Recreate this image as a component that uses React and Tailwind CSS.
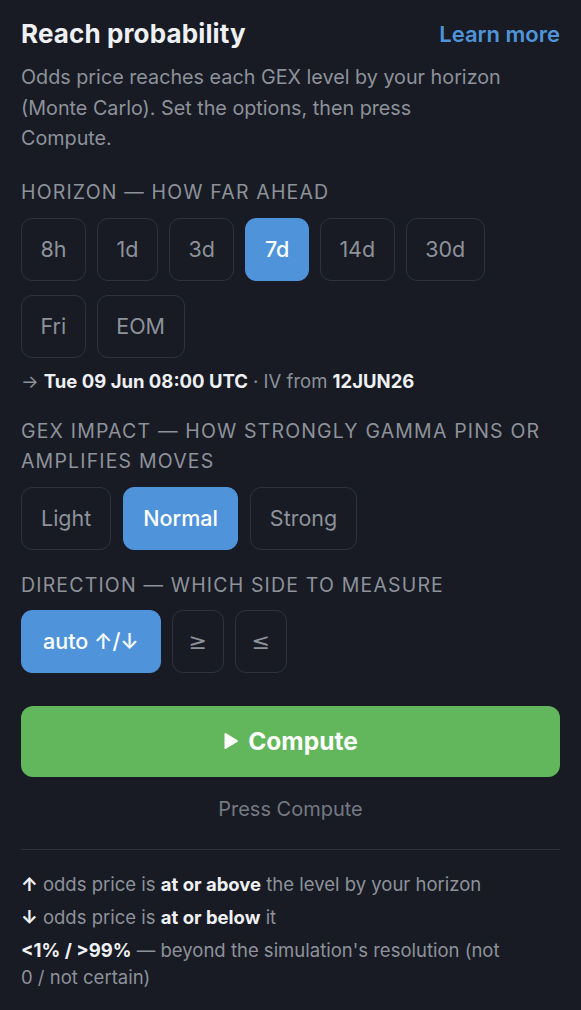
import React, { useState } from 'react';

const horizons = ['8h', '1d', '3d', '7d', '14d', '30d', 'Fri', 'EOM'];
const impacts = ['Light', 'Normal', 'Strong'];

const Chip = ({ active, children, onClick, className = '' }) => (
  <button
    onClick={onClick}
    className={`h-[63px] rounded-[11px] border text-[21.5px] ${
      active
        ? 'bg-[#4f94db] border-[#4f94db] text-white font-medium'
        : 'bg-transparent border-[#2e333b] text-[#8d929b]'
    } ${className}`}
  >
    {children}
  </button>
);

export default function App() {
  const [horizon, setHorizon] = useState('7d');
  const [impact, setImpact] = useState('Normal');
  const [dir, setDir] = useState('auto');

  return (
    <div
      className="min-h-[1010px] w-full bg-[#181b23] px-[21px] pt-[18px] pb-6 text-[#8d929b]"
      style={{ fontFamily: 'Inter, "Noto Sans", sans-serif' }}
    >
      <div className="flex items-center justify-between">
        <h1 className="text-[26px] leading-[32px] font-bold tracking-[0.005em] text-[#eef0f3]">Reach probability</h1>
        <a className="text-[22px] leading-[32px] font-semibold text-[#4f94db]">Learn more</a>
      </div>
      <p className="mt-[12px] max-w-[484px] text-[19.75px] leading-[30.5px] text-[#8d929b]">
        Odds price reaches each GEX level by your horizon (Monte Carlo). Set the options, then press Compute.
      </p>

      {/* horizon */}
      <div className="mt-[26px] text-[19.5px] leading-[24px] uppercase tracking-[0.06em]">Horizon — how far ahead</div>
      <div className="mt-[14px] flex flex-wrap gap-x-[11px] gap-y-[14px]">
        {horizons.map((h) => (
          <Chip key={h} active={horizon === h} onClick={() => setHorizon(h)} className="px-[18.5px]">
            {h}
          </Chip>
        ))}
      </div>
      <div className="mt-[11px] text-[18.5px] leading-[24px]">
        → <span className="font-bold text-[#eef0f3]">Tue 09 Jun 08:00 UTC</span> · IV from{' '}
        <span className="font-bold text-[#eef0f3]">12JUN26</span>
      </div>

      {/* gex impact */}
      <div className="mt-[23px] text-[19.5px] leading-[30px] uppercase tracking-[0.06em]">
        GEX impact — how strongly gamma pins or amplifies moves
      </div>
      <div className="mt-[11px] flex gap-[12px]">
        {impacts.map((i) => (
          <Chip key={i} active={impact === i} onClick={() => setImpact(i)} className="px-[19px]">
            {i}
          </Chip>
        ))}
      </div>

      {/* direction */}
      <div className="mt-[23px] text-[19.5px] leading-[24px] uppercase tracking-[0.06em]">Direction — which side to measure</div>
      <div className="mt-[13px] flex gap-[11px]">
        <Chip active={dir === 'auto'} onClick={() => setDir('auto')} className="px-[21px]">
          auto ↑/↓
        </Chip>
        <Chip active={dir === 'ge'} onClick={() => setDir('ge')} className="w-[52px]">
          <span className="text-[22px] font-['DejaVu_Sans',sans-serif]">≥</span>
        </Chip>
        <Chip active={dir === 'le'} onClick={() => setDir('le')} className="w-[52px]">
          <span className="text-[22px] font-['DejaVu_Sans',sans-serif]">≤</span>
        </Chip>
      </div>

      <button className="mt-[33px] flex h-[71px] w-full items-center justify-center gap-[9px] rounded-[12px] bg-[#62b65b] text-[24.5px] font-bold text-white">
        <svg width="16" height="18" viewBox="0 0 16 18">
          <path d="M2.5 2 L14 9 L2.5 16 Z" fill="white" stroke="white" strokeWidth="2" strokeLinejoin="round" />
        </svg>
        Compute
      </button>
      <div className="mt-[20px] text-center text-[20px] leading-[24px] text-[#747983]">Press Compute</div>

      <div className="mt-[28px] border-t border-[#2e333b] pt-[18px] text-[18.5px] leading-[33px]">
        <div>
          <span className="font-bold text-[#eef0f3]">↑</span> odds price is{' '}
          <span className="font-bold text-[#eef0f3]">at or above</span> the level by your horizon
        </div>
        <div>
          <span className="font-bold text-[#eef0f3]">↓</span> odds price is{' '}
          <span className="font-bold text-[#eef0f3]">at or below</span> it
        </div>
        <div className="pt-[3px] leading-[27px]">
          <span className="font-bold text-[#eef0f3]">&lt;1% / &gt;99%</span> — beyond the simulation's resolution (not{' '}
          <span className="whitespace-nowrap">0 / not certain)</span>
        </div>
      </div>
    </div>
  );
}
